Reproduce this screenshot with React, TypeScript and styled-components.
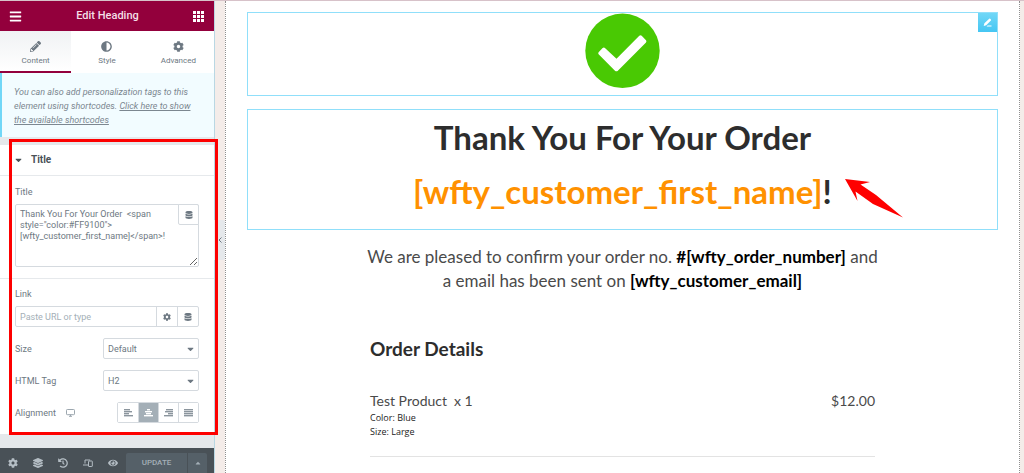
import React from "react";
import styled, { createGlobalStyle } from "styled-components";
import {
  FaAdjust,
  FaBars,
  FaCaretDown,
  FaCaretUp,
  FaCog,
  FaDatabase,
  FaEye,
  FaHistory,
  FaLayerGroup,
  FaPencilAlt,
} from "react-icons/fa";

const GlobalStyle = createGlobalStyle`
  *, *::before, *::after { box-sizing: border-box; }
  body { margin: 0; background: #f4ece9; }
  button, input, select, textarea { font: inherit; color: inherit; margin: 0; }
  button { border: 0; padding: 0; background: none; cursor: pointer; }
  svg { display: block; }
`;

const Editor = styled.div`
  display: grid;
  grid-template-columns: 215px minmax(0, 1fr);
  min-height: 100vh;
  overflow: hidden;
  border-top: 1px solid #d7c2c9;
`;

/* ---------- Panel ---------- */

const Panel = styled.aside`
  position: relative;
  z-index: 1;
  display: flex;
  flex-direction: column;
  background: #e5e8eb;
  border-right: 1px solid #b9d7e3;
  color: #6d7882;
  font: 9px/14px Roboto, "Liberation Sans", sans-serif;
`;

const PanelHeader = styled.header`
  display: flex;
  align-items: center;
  justify-content: space-between;
  height: 30px;
  padding: 0 10px 0 9px;
  background: #93003c;
  color: #fff;
`;

const PanelTitle = styled.h1`
  margin: 0;
  font-size: 11px;
  font-weight: 500;
  color: #f4dfe7;
`;

const Tabs = styled.nav`
  display: grid;
  grid-template-columns: repeat(3, 1fr);
  height: 42px;
  background: #fff;
`;

const Tab = styled.button<{ $active?: boolean }>`
  display: flex;
  flex-direction: column;
  align-items: center;
  gap: 3px;
  padding-top: 10px;
  font-size: 8px;
  line-height: 12px;
  border-bottom: 2px solid ${(p) => (p.$active ? "#93003c" : "transparent")};
  background: ${(p) => (p.$active ? "linear-gradient(#f0f2f4, #fff)" : "#fff")};
  svg { width: 11px; height: 11px; }
`;

const Notice = styled.p`
  margin: 0 0 8px;
  padding: 12px 14px 10px 12px;
  border-left: 2px solid #71d7f7;
  background: #f2fcff;
  font-size: 9px;
  font-style: italic;
  color: #7c8790;
  a { color: inherit; }
`;

const Section = styled.section`
  position: relative;
  z-index: 1;
  background: #fff;
`;

const Highlight = styled.div`
  position: absolute;
  inset: -6px -4px -1px 9px;
  border: 3px solid #fd0000;
  pointer-events: none;
`;

const SectionToggle = styled.button`
  display: flex;
  align-items: center;
  gap: 9px;
  width: 100%;
  height: 31px;
  padding: 0 15px;
  border-bottom: 1px solid #e6e9ec;
  color: #495157;
  font-size: 10px;
  font-weight: 700;
  svg { width: 7px; height: 10px; }
`;

const Controls = styled.div`
  display: flex;
  flex-direction: column;
  padding: 9px 15px 11px;
`;

const Label = styled.label`
  display: block;
`;

const Divider = styled.hr`
  width: calc(100% + 30px);
  margin: 11px -15px 8px;
  border: 0;
  border-top: 1px solid #e6e9ec;
`;

const TextField = styled.div`
  position: relative;
  margin-top: 5px;
`;

const TextArea = styled.textarea`
  display: block;
  width: 100%;
  height: 63px;
  padding: 4px 20px 4px 4px;
  border: 1px solid #d5dadf;
  border-radius: 2px;
  background: #fff;
  line-height: 11px;
  resize: vertical;
  outline: none;
`;

const TagButton = styled.button`
  position: absolute;
  top: 0;
  right: 0;
  display: grid;
  place-items: center;
  width: 21px;
  height: 21px;
  border: 1px solid #d5dadf;
  border-radius: 0 2px 0 2px;
  background: #fff;
  svg { width: 8px; height: 8px; }
`;

const InputGroup = styled.div`
  display: grid;
  grid-template-columns: minmax(0, 1fr) 21px 21px;
  height: 21px;
  margin: 5px 0 11px;
  border: 1px solid #d5dadf;
  border-radius: 2px;
  button {
    display: grid;
    place-items: center;
    border-left: 1px solid #d5dadf;
  }
  svg { width: 8px; height: 8px; }
`;

const LinkInput = styled.input`
  min-width: 0;
  padding: 0 4px;
  border: 0;
  background: none;
  outline: none;
  &::placeholder { color: #a4afb7; opacity: 1; }
`;

const ControlRow = styled.div`
  display: flex;
  align-items: center;
  justify-content: space-between;
  height: 21px;
  margin-bottom: 11px;
  &:last-child { margin-bottom: 0; }
`;

const SelectBox = styled.div`
  position: relative;
  width: 96px;
  svg {
    position: absolute;
    right: 5px;
    top: 6px;
    width: 7px;
    height: 10px;
    pointer-events: none;
  }
`;

const Select = styled.select`
  display: block;
  width: 100%;
  height: 21px;
  padding: 0 4px;
  border: 1px solid #d5dadf;
  border-radius: 2px;
  background: #fff;
  appearance: none;
`;

const LabelGroup = styled.div`
  display: flex;
  align-items: center;
  gap: 10px;
`;

const Segments = styled.div`
  display: flex;
  border: 1px solid #d5dadf;
  border-radius: 2px;
`;

const Segment = styled.button<{ $active?: boolean }>`
  display: grid;
  place-items: center;
  width: 20px;
  height: 19px;
  background: ${(p) => (p.$active ? "#a4afb7" : "#fff")};
  color: ${(p) => (p.$active ? "#fff" : "#8b959d")};
  & + & { border-left: 1px solid #d5dadf; }
`;

const PanelFooter = styled.footer`
  display: grid;
  grid-template-columns: repeat(5, 1fr) 61px 20px;
  align-items: center;
  height: 25px;
  margin-top: auto;
  padding: 0 7px 0 0;
  background: #495157;
  color: #b4bdc4;
`;

const ToolButton = styled.button`
  display: grid;
  place-items: center;
  height: 25px;
  padding-top: 5px;
  svg { width: 10px; height: 10px; }
`;

const UpdateButton = styled.button`
  height: 20px;
  align-self: end;
  display: grid;
  place-items: center;
  border-radius: 2px 0 0 0;
  background: #556068;
  color: #a4afb7;
  font-size: 8px;
  font-weight: 500;
  & + & { border-left: 1px solid #495157; border-radius: 0 2px 0 0; }
  svg { width: 6px; height: 8px; }
`;

const CollapseHandle = styled.button`
  position: absolute;
  top: 219px;
  left: 214px;
  display: grid;
  place-items: center;
  width: 11px;
  height: 40px;
  border-radius: 0 2px 2px 0;
  background: #e5e8eb;
`;

/* ---------- Canvas ---------- */

const Canvas = styled.main`
  margin: 0 4px 0 10px;
  padding: 11px 21px 0;
  border: 1px dotted #8f8f8f;
  border-width: 0 1px;
  background: #fff;
  color: #4a4a4a;
  font-family: Lato, "Liberation Sans", sans-serif;
`;

const Widget = styled.div<{ $gap: number }>`
  position: relative;
  margin-bottom: ${(p) => p.$gap}px;
  border: 1px solid #90dffa;
  text-align: center;
`;

const EditWidget = styled.button`
  position: absolute;
  top: 0;
  right: 0;
  display: grid;
  place-items: center;
  width: 19px;
  height: 19px;
  background: linear-gradient(#71d7f7, #45c6f3);
`;

const CheckHolder = styled.div`
  display: flex;
  justify-content: center;
  padding: 0 0 7px;
`;

const Heading = styled.h2`
  margin: 0;
  padding: 0 0 11px;
  color: #2d2d2d;
  font-size: 33px;
  font-weight: 700;
  line-height: 54px;
`;

const Accent = styled.span`
  color: #ff9100;
`;

const Arrow = styled.svg`
  position: absolute;
  left: 597px;
  top: 69px;
`;

const Message = styled.p`
  margin: 0 0 40px;
  text-align: center;
  font-size: 17px;
  line-height: 24px;
  strong { color: #000; }
`;

const Order = styled.section`
  width: 505px;
  max-width: 100%;
  margin: 0 auto;
`;

const OrderTitle = styled.h3`
  margin: 0 0 26px;
  color: #2d2d2d;
  font-size: 19px;
  font-weight: 700;
  line-height: 32px;
`;

const OrderTable = styled.table`
  width: 100%;
  border-collapse: collapse;
  font-size: 14px;
  line-height: 20px;
  td {
    padding: 0 0 17px;
    border-bottom: 1px solid #e3e3e3;
    vertical-align: top;
  }
  td:last-child { text-align: right; }
`;

const Quantity = styled.span`
  margin-left: 7px;
`;

const Meta = styled.div`
  color: #222;
  font: 9px/14px "Open Sans", "Noto Sans", sans-serif;
`;

/* ---------- Icons ---------- */

const GridIcon = () => (
  <svg width="11" height="11" viewBox="0 0 11 11" fill="currentColor" aria-hidden>
    {[0, 4, 8].map((y) => [0, 4, 8].map((x) => <rect key={`${x}${y}`} x={x} y={y} width="3" height="3" />))}
  </svg>
);

const ALIGN_BARS: Record<string, number[][]> = {
  Left: [[0, 6], [0, 8], [0, 5], [0, 9]],
  Center: [[3, 3], [1, 7], [2, 5], [0, 9]],
  Right: [[2, 7], [1, 8], [4, 5], [0, 9]],
  Justified: [[0, 9], [0, 9], [0, 9], [0, 9]],
};

const AlignIcon = ({ kind }: { kind: string }) => (
  <svg width="9" height="8" viewBox="0 0 9 8" fill="currentColor" aria-hidden>
    {ALIGN_BARS[kind].map(([x, w], i) => (
      <rect key={i} x={x} y={i * 2} width={w} height="1.4" />
    ))}
  </svg>
);

const DesktopIcon = () => (
  <svg width="9" height="8" viewBox="0 0 9 8" fill="none" stroke="#9ba6ae" aria-hidden>
    <rect x=".5" y=".5" width="8" height="5.2" rx=".8" />
    <path d="M3 7.3h3M4.500 5.700v1.500" />
  </svg>
);

const ResponsiveIcon = () => (
  <svg viewBox="0 0 10 9" fill="none" stroke="currentColor" aria-hidden>
    <path d="M2 5V1.500h5.200M0 6.500h5" />
    <rect x="5.500" y="2.500" width="3.800" height="5.500" rx=".5" />
  </svg>
);

const CheckCircle = () => (
  <svg width="75" height="75" viewBox="0 0 75 75" role="img" aria-label="Order confirmed">
    <circle cx="37.500" cy="37.800" r="37.200" fill="#49c903" />
    <path
      d="M13.600 39.300l4-4.200q1.300-1 2.600.1L31.500 45.700 54.300 22.800q1.200-1 2.400 0l4.300 4.400q.9 1.100 0 2.200L32.600 57.900q-1.200.9-2.400 0L13.600 41.200q-.8-.9 0-1.900z"
      fill="#fff"
    />
  </svg>
);

const App = () => (
  <Editor>
    <GlobalStyle />
    <Panel>
      <PanelHeader>
        <button aria-label="Menu"><FaBars size={13} /></button>
        <PanelTitle>Edit Heading</PanelTitle>
        <button aria-label="Widgets"><GridIcon /></button>
      </PanelHeader>
      <Tabs>
        <Tab $active><FaPencilAlt />Content</Tab>
        <Tab><FaAdjust />Style</Tab>
        <Tab><FaCog />Advanced</Tab>
      </Tabs>
      <Notice>
        You can also add personalization tags to this element using shortcodes.{" "}
        <a href="#shortcodes">Click here to show the available shortcodes</a>
      </Notice>
      <Section>
        <SectionToggle><FaCaretDown />Title</SectionToggle>
        <Controls>
          <Label htmlFor="title">Title</Label>
          <TextField>
            <TextArea
              id="title"
              spellCheck={false}
              defaultValue={'Thank You For Your Order  <span style="color:#FF9100">[wfty_customer_first_name]</span>!'}
            />
            <TagButton aria-label="Dynamic tags"><FaDatabase /></TagButton>
          </TextField>
          <Divider />
          <Label htmlFor="link">Link</Label>
          <InputGroup>
            <LinkInput id="link" placeholder="Paste URL or type" />
            <button aria-label="Link options"><FaCog /></button>
            <button aria-label="Dynamic link"><FaDatabase /></button>
          </InputGroup>
          <ControlRow>
            <Label htmlFor="size">Size</Label>
            <SelectBox>
              <Select id="size"><option>Default</option></Select>
              <FaCaretDown />
            </SelectBox>
          </ControlRow>
          <ControlRow>
            <Label htmlFor="tag">HTML Tag</Label>
            <SelectBox>
              <Select id="tag"><option>H2</option></Select>
              <FaCaretDown />
            </SelectBox>
          </ControlRow>
          <ControlRow>
            <LabelGroup><span id="alignment">Alignment</span><DesktopIcon /></LabelGroup>
            <Segments role="group" aria-labelledby="alignment">
              {Object.keys(ALIGN_BARS).map((kind) => (
                <Segment key={kind} $active={kind === "Center"} aria-label={kind}>
                  <AlignIcon kind={kind} />
                </Segment>
              ))}
            </Segments>
          </ControlRow>
        </Controls>
        <Highlight />
      </Section>
      <PanelFooter>
        <ToolButton aria-label="Settings"><FaCog /></ToolButton>
        <ToolButton aria-label="Navigator"><FaLayerGroup /></ToolButton>
        <ToolButton aria-label="History"><FaHistory /></ToolButton>
        <ToolButton aria-label="Responsive mode"><ResponsiveIcon /></ToolButton>
        <ToolButton aria-label="Preview"><FaEye /></ToolButton>
        <UpdateButton>UPDATE</UpdateButton>
        <UpdateButton aria-label="Save options"><FaCaretUp /></UpdateButton>
      </PanelFooter>
      <CollapseHandle aria-label="Hide panel">
        <svg width="4" height="6" viewBox="0 0 4 6" fill="none" stroke="#6d7882" aria-hidden>
          <path d="M3.500.5L1 3l2.500 2.500" />
        </svg>
      </CollapseHandle>
    </Panel>
    <Canvas>
      <Widget $gap={13}>
        <CheckHolder><CheckCircle /></CheckHolder>
        <EditWidget aria-label="Edit image">
          <svg width="9" height="9" viewBox="0 0 9 9" fill="#fff" aria-hidden>
            <path d="M.7 8l.7-2.700L6.200.7q.5-.4 1 0l.7.7q.4.5 0 1L3.200 7.200zM4.500 7.500H8.500V8.400H3.600z" />
          </svg>
        </EditWidget>
      </Widget>
      <Widget $gap={15}>
        <Heading>
          Thank You For Your Order<br />
          <Accent>[wfty_customer_first_name]</Accent>!
        </Heading>
        <Arrow width="60" height="40" viewBox="0 0 60 40" fill="#fe0000" aria-hidden>
          <path d="M0 0L25 3 15.500 5.500 31 16 58 38.500 28 25 10.500 12.500 12.500 22z" />
        </Arrow>
      </Widget>
      <Message>
        We are pleased to confirm your order no. <strong>#[wfty_order_number]</strong> and<br />
        a email has been sent on <strong>[wfty_customer_email]</strong>
      </Message>
      <Order>
        <OrderTitle>Order Details</OrderTitle>
        <OrderTable>
          <tbody>
            <tr>
              <td>
                Test Product<Quantity>x 1</Quantity>
                <Meta>Color: Blue</Meta>
                <Meta>Size: Large</Meta>
              </td>
              <td>$12.00</td>
            </tr>
          </tbody>
        </OrderTable>
      </Order>
    </Canvas>
  </Editor>
);

export default App;
